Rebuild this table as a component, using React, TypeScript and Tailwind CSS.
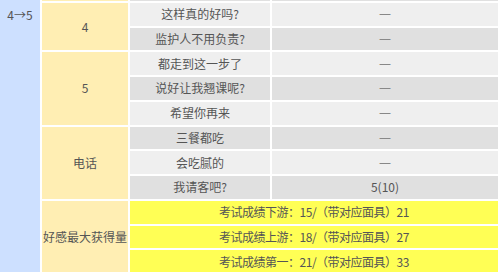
import React from "react";

const font = { fontFamily: '"Noto Sans CJK SC", "Noto Sans", sans-serif' };
const dashFont = { fontFamily: '"DejaVu Sans", sans-serif' };

const grayRows: { q: string; a: string }[] = [
  { q: "这样真的好吗?", a: "—" },
  { q: "监护人不用负责?", a: "—" },
  { q: "都走到这一步了", a: "—" },
  { q: "说好让我翘课呢?", a: "—" },
  { q: "希望你再来", a: "—" },
  { q: "三餐都吃", a: "—" },
  { q: "会吃腻的", a: "—" },
  { q: "我请客吧?", a: "5(10)" },
];

const yellowRows = [
  "考试成绩下游：15/（带对应面具）21",
  "考试成绩上游：18/（带对应面具）27",
  "考试成绩第一：21/（带对应面具）33",
];

export default function App() {
  return (
    <div className="w-[500px] h-[272px] overflow-hidden bg-white text-[12px] text-[#555]" style={font}>
      <div
        className="grid gap-[2px] mt-[-22px] pr-[2px]"
        style={{
          gridTemplateColumns: "40px 86px 140px 226px",
          gridTemplateRows: "repeat(12, 22.75px)",
        }}
      >
        {/* column 1 */}
        <div className="row-start-1 row-end-[13] col-start-1 bg-[#cde0ff] flex justify-center pt-[27px] leading-[20px]">
          4→5
        </div>
        {/* previous row sliver */}
        <div className="row-start-1 col-start-2 bg-[#ffeeb3]" />
        <div className="row-start-1 col-start-3 bg-[#e0e0e0]" />
        <div className="row-start-1 col-start-4 bg-[#e0e0e0]" />

        {/* column 2 groups */}
        <div className="row-start-2 row-end-4 col-start-2 bg-[#ffeeb3] flex items-center justify-center">4</div>
        <div className="row-start-4 row-end-7 col-start-2 bg-[#ffeeb3] flex items-center justify-center">5</div>
        <div className="row-start-7 row-end-[10] col-start-2 bg-[#ffeeb3] flex items-center justify-center">电话</div>
        <div className="row-start-[10] row-end-[13] col-start-2 bg-[#ffeeb3] flex items-center justify-center">好感最大获得量</div>

        {grayRows.map((r, i) => {
          const bg = i % 2 === 0 ? "bg-[#efefef]" : "bg-[#e0e0e0]";
          return (
            <React.Fragment key={i}>
              <div className={`col-start-3 ${bg} flex items-center justify-center`} style={{ gridRowStart: i + 2 }}>
                {r.q}
              </div>
              <div className={`col-start-4 ${bg} flex items-center justify-center`} style={{ gridRowStart: i + 2 }}>
                {r.a === "—" ? (
                  <span className="text-[#888]" style={dashFont}>
                    —
                  </span>
                ) : (
                  r.a
                )}
              </div>
            </React.Fragment>
          );
        })}

        {yellowRows.map((t, i) => (
          <div
            key={i}
            className="col-start-3 col-end-5 bg-[#ffff55] flex items-center justify-center tracking-[-0.5px]"
            style={{ gridRowStart: i + 10 }}
          >
            {t}
          </div>
        ))}
      </div>
    </div>
  );
}
